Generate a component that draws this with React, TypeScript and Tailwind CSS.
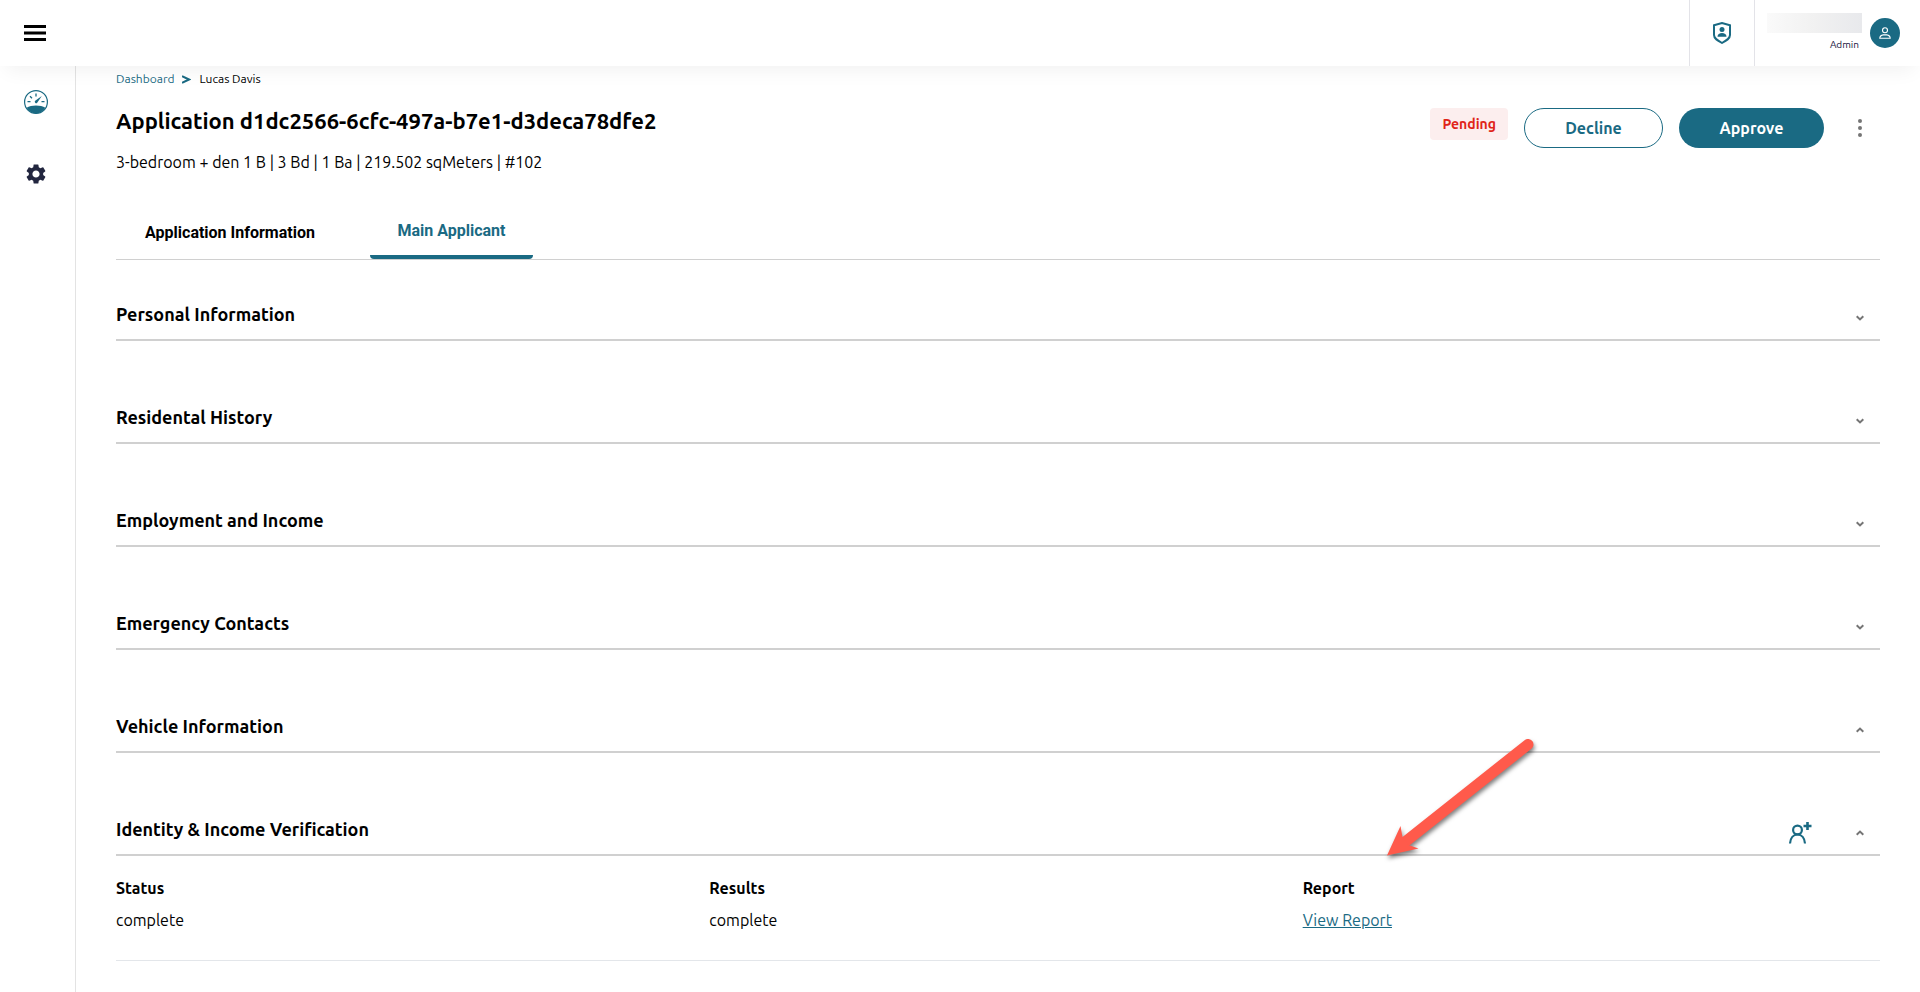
import React from "react";

const sections = [
  { title: "Personal Information", open: false },
  { title: "Residental History", open: false },
  { title: "Employment and Income", open: false },
  { title: "Emergency Contacts", open: false },
  { title: "Vehicle Information", open: true },
];

function Chevron({ open }: { open: boolean }) {
  return (
    <svg viewBox="0 0 8 6" className="h-[6px] w-2 shrink-0" fill="none" stroke="#757575" strokeWidth="2">
      <path d={open ? "M.7 4.800 4 1.600 7.300 4.800" : "M.7 1.200 4 4.400 7.300 1.200"} />
    </svg>
  );
}

function AddPerson() {
  return (
    <svg viewBox="0 0 24 24" className="size-6" fill="none" stroke="#1a6a83" strokeWidth="2.200">
      <circle cx="9.500" cy="9" r="4.400" />
      <path d="M2 22.500c.4-5.400 3.400-9 7.500-9s7.100 3.600 7.500 9" />
      <path d="M19.500 1v8M15.500 5h8" strokeWidth="2.600" />
    </svg>
  );
}

function Gauge() {
  return (
    <svg viewBox="0 0 24 24" className="size-6" fill="none" stroke="#1a6a83">
      <circle cx="12" cy="12" r="11.400" strokeWidth="1.200" />
      <path d="M2.600 17.800C5 16.400 8.500 15.500 12 15.500s7 .9 9.400 2.300A11.500 11.500 0 0 1 12 23.500a11.500 11.500 0 0 1-9.400-5.700Z" fill="#1a6a83" stroke="none" />
      <path d="M12 3.500v3M3.500 11.700h3M17.500 11.700h3M6 6.300l2 2" strokeWidth="1.300" />
      <path d="M17.800 6 13.200 12.700a1.400 1.400 0 1 1-2-2Z" fill="#1a6a83" stroke="none" />
    </svg>
  );
}

function Header() {
  return (
    <header className="relative z-10 flex h-[66px] items-stretch justify-between bg-white shadow-[0_10px_20px_-6px_rgba(0,0,0,0.06)]">
      <button type="button" aria-label="Toggle menu" className="flex items-center pl-6">
        <svg viewBox="0 0 22 16" className="h-4 w-[22px]" fill="#000">
          <path d="M0 0h22v3H0zM0 6.500h22v3H0zM0 13h22v3H0z" />
        </svg>
      </button>
      <div className="flex">
        <button type="button" aria-label="Identity" className="flex w-[65px] items-center justify-center border-l border-[#e3e3e8]">
          <svg viewBox="0 0 18 22" className="h-[22px] w-[18px]" fill="#1a6a83">
            <path fill="none" stroke="#1a6a83" strokeWidth="2" d="M1 3.200 9 1l8 2.200V13c0 3.500-3.500 5.500-8 8-4.500-2.500-8-4.500-8-8Z" />
            <circle cx="9" cy="7.600" r="2.500" />
            <path d="M4.500 14.800c0-2.700 2-3.800 4.500-3.800s4.500 1.100 4.500 3.800Z" />
          </svg>
        </button>
        <div className="flex items-center gap-2 border-l border-[#e3e3e8] pr-5 pl-3">
          <div className="flex flex-col items-end gap-1">
            <div className="h-5 w-[95px] bg-linear-to-r from-[#fafafa] via-[#f1f1f1] to-[#e8e9ec]" />
            <span className="pr-[3px] text-[10px] leading-4 text-[#14113a]">Admin</span>
          </div>
          <button type="button" aria-label="Account" className="flex size-[30px] items-center justify-center rounded-full bg-[#1a6a83]">
            <svg viewBox="0 0 12 12" className="size-3" fill="none" stroke="#fff" strokeWidth="1.100">
              <circle cx="6" cy="3.300" r="2.500" />
              <path d="M.8 11.200c0-2.200 1.700-3 3.500-3.300h3.400c1.800.3 3.500 1.100 3.500 3.300Z" />
            </svg>
          </button>
        </div>
      </div>
    </header>
  );
}

function Sidebar() {
  return (
    <nav className="flex w-[76px] shrink-0 flex-col items-center gap-12 border-r border-[#e3e3e3] pt-6 pr-1">
      <a href="#dashboard" aria-label="Dashboard" className="block">
        <Gauge />
      </a>
      <a href="#settings" aria-label="Settings" className="block">
        <svg viewBox="0 0 24 24" className="size-6" fill="#22263f">
          <path d="M19.140 12.940c.04-.3.060-.61.060-.94 0-.32-.02-.64-.07-.94l2.030-1.580a.49.49 0 0 0 .12-.61l-1.920-3.320a.488.488 0 0 0-.59-.22l-2.390.96c-.5-.38-1.030-.7-1.620-.94l-.36-2.540a.484.484 0 0 0-.48-.41h-3.840c-.24 0-.43.17-.47.41l-.36 2.540c-.59.24-1.130.57-1.620.94l-2.390-.96c-.22-.08-.47 0-.59.22L2.740 8.870c-.12.21-.08.47.12.61l2.030 1.580c-.05.3-.09.63-.09.94s.02.64.07.94l-2.030 1.580a.49.49 0 0 0-.12.61l1.920 3.320c.12.22.37.29.59.22l2.390-.96c.5.38 1.030.7 1.620.94l.36 2.540c.05.24.24.41.48.41h3.840c.24 0 .44-.17.47-.41l.36-2.540c.59-.24 1.130-.56 1.620-.94l2.390.96c.22.08.47 0 .59-.22l1.920-3.320c.12-.22.07-.47-.12-.61l-2.010-1.580zM12 15.600c-1.980 0-3.600-1.620-3.600-3.600s1.620-3.600 3.600-3.600 3.600 1.620 3.600 3.600-1.620 3.600-3.600 3.600z" />
        </svg>
      </a>
    </nav>
  );
}

function SectionHeader({ title, open, children }: { title: string; open: boolean; children?: React.ReactNode }) {
  return (
    <div className="flex h-[53px] items-center justify-between border-b-2 border-[#d0d0d0]">
      <h2 className="text-lg leading-6 font-bold">{title}</h2>
      <div className="flex items-center gap-11 pt-2 pr-4">
        {children}
        <button type="button" aria-expanded={open} aria-label={title} className="flex pt-px">
          <Chevron open={open} />
        </button>
      </div>
    </div>
  );
}

export default function App() {
  return (
    <div className="flex min-h-screen flex-col bg-white font-['Ubuntu','Noto_Sans',sans-serif] text-base text-black">
      <Header />
      <div className="flex grow">
        <Sidebar />
        <main className="min-w-0 grow px-10 pt-1">
          <nav aria-label="Breadcrumb" className="flex items-center gap-2 text-xs leading-[18px]">
            <a href="#dashboard" className="text-[#1a6a83]">Dashboard</a>
            <svg viewBox="0 0 9 9" className="size-[9px]" fill="none" stroke="#1a6a83" strokeWidth="2">
              <path d="M0 1.200 7 4.500 0 7.800" />
            </svg>
            <span>Lucas Davis</span>
          </nav>

          <div className="flex items-start justify-between pt-5">
            <div>
              <h1 className="text-[22px] leading-[26px] font-bold">Application d1dc2566-6cfc-497a-b7e1-d3deca78dfe2</h1>
              <p className="pt-4 leading-6">3-bedroom + den 1 B | 3 Bd | 1 Ba | 219.502 sqMeters | #102</p>
            </div>
            <div className="flex items-start gap-4">
              <span className="flex h-8 items-center rounded bg-[#fceeee] px-3 text-sm font-bold text-[#e02418]">Pending</span>
              <button type="button" className="h-10 w-[139px] rounded-full border border-[#1a6a83] font-bold text-[#1a6a83]">Decline</button>
              <button type="button" className="h-10 w-[145px] rounded-full bg-[#1a6a83] font-bold text-white">Approve</button>
              <button type="button" aria-label="More actions" className="flex h-10 w-10 items-center justify-center">
                <svg viewBox="0 0 4 18" className="h-[18px] w-1" fill="#757575">
                  <circle cx="2" cy="2" r="2" />
                  <circle cx="2" cy="9" r="2" />
                  <circle cx="2" cy="16" r="2" />
                </svg>
              </button>
            </div>
          </div>

          <div role="tablist" className="mt-8 flex h-[54px] gap-[26px] border-b border-[#d0d0d0] font-['Roboto',sans-serif]">
            <button type="button" role="tab" aria-selected={false} className="w-[228px] font-bold">Application Information</button>
            <button type="button" role="tab" aria-selected className="w-[163px] rounded-b border-b-4 border-[#1a6a83] font-bold text-[#1a6a83]">Main Applicant</button>
          </div>

          <div className="flex flex-col gap-[50px] pt-7">
            {sections.map((s) => (
              <SectionHeader key={s.title} title={s.title} open={s.open} />
            ))}
            <section className="relative">
              <SectionHeader title="Identity & Income Verification" open>
                <button type="button" aria-label="Add person">
                  <AddPerson />
                </button>
              </SectionHeader>
              <dl className="grid grid-cols-3 gap-4 border-b border-[#e3e6ea] pt-5 pb-7">
                <div>
                  <dt className="leading-6 font-bold">Status</dt>
                  <dd className="pt-2 leading-6">complete</dd>
                </div>
                <div>
                  <dt className="leading-6 font-bold">Results</dt>
                  <dd className="pt-2 leading-6">complete</dd>
                </div>
                <div>
                  <dt className="leading-6 font-bold">Report</dt>
                  <dd className="pt-2 leading-6">
                    <a href="#report" className="text-[#1a6a83] underline">View Report</a>
                  </dd>
                </div>
              </dl>
              <svg viewBox="0 0 160 130" className="pointer-events-none absolute right-[340px] -top-[67px] h-[130px] w-40 drop-shadow-[1px_3px_2px_rgba(0,0,0,0.5)]">
                <path d="M148 8.500 25 106" stroke="#ff5a4b" strokeWidth="11" strokeLinecap="round" />
                <path d="M7 119.500 20.500 90 22.500 101 28.500 109 38.500 112.500Z" fill="#ff5a4b" />
              </svg>
            </section>
          </div>
        </main>
      </div>
    </div>
  );
}
